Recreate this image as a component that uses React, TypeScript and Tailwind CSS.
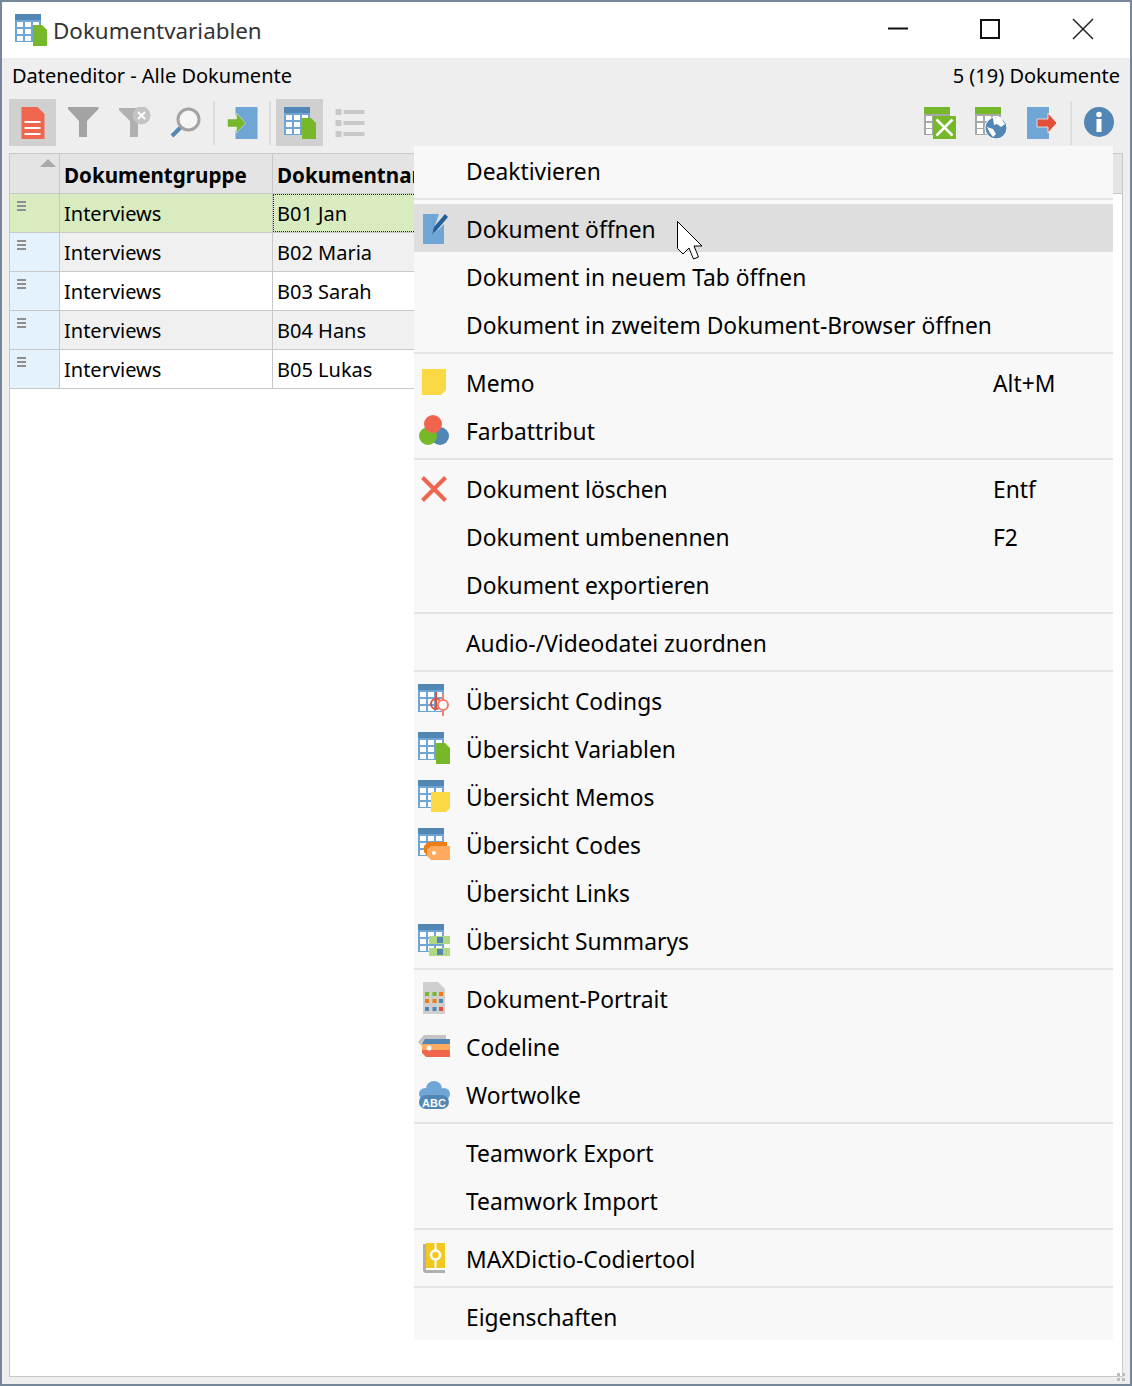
import React from "react";

const TableGrid = () => (
  <>
    <rect x="0" y="0" width="26" height="28" fill="#6fa6d6" />
    <rect x="0" y="0" width="26" height="6" fill="#5286b4" />
    {[2, 10, 18].map((x) =>
      [8, 15, 22].map((y) => (
        <rect key={`${x}-${y}`} x={x} y={y} width="6" height="5" fill="#fff" />
      ))
    )}
  </>
);

const GreyGrid = () => (
  <>
    <rect x="0" y="0" width="26" height="28" fill="#a8a8a8" />
    <rect x="0" y="0" width="26" height="7" fill="#76b82a" />
    {[2, 10, 18].map((x) =>
      [9, 16, 22].map((y) => (
        <rect key={`${x}-${y}`} x={x} y={y} width="6" height="5" fill="#fff" />
      ))
    )}
  </>
);

const Icon = ({ children }: { children?: React.ReactNode }) => (
  <svg width="32" height="32" viewBox="0 0 32 32" className="shrink-0">
    {children}
  </svg>
);

const VariablesIcon = () => (
  <Icon>
    <TableGrid />
    <path d="M18 11h9l5 5v16H18z" fill="#76b82a" />
  </Icon>
);

const menuIcons: Record<string, React.ReactNode> = {
  open: (
    <Icon>
      <path d="M5 2h16l-5 14-2 5 6-3 6-6v20H5z" fill="#6fa6d6" />
      <path d="M14 22l2-7 11-13 3 3-11 13z" fill="#1f6098" />
    </Icon>
  ),
  memo: (
    <Icon>
      <path d="M4 3h24v21l-5 5H4z" fill="#fbd944" />
    </Icon>
  ),
  color: (
    <Icon>
      <circle cx="22" cy="22" r="9" fill="#5286b4" />
      <circle cx="10" cy="22" r="9" fill="#76b82a" />
      <circle cx="15" cy="10" r="9" fill="#f0654e" />
    </Icon>
  ),
  remove: (
    <Icon>
      <path d="M4.5 5.5l23 23M27.5 5.5l-23 23" stroke="#f0654e" strokeWidth="4" fill="none" />
    </Icon>
  ),
  codings: (
    <Icon>
      <TableGrid />
      <path d="M18 8v16" stroke="#e2503a" strokeWidth="2" />
      <path d="M25 10v22" stroke="#f57f6f" strokeWidth="2" />
      <circle cx="18" cy="20" r="5" fill="none" stroke="#e2503a" strokeWidth="2" />
      <circle cx="25" cy="21" r="5" fill="#fff" stroke="#f57f6f" strokeWidth="2" />
    </Icon>
  ),
  variables: <VariablesIcon />,
  memos: (
    <Icon>
      <TableGrid />
      <path d="M13 12h19v16l-4 4H13z" fill="#fbd944" />
    </Icon>
  ),
  codes: (
    <Icon>
      <TableGrid />
      <path d="M10 14h19v6H9v8l-3-4v-6z" fill="#ef7d14" />
      <path d="M13 18h19v14H13l-4-4v-6z" fill="#ffaa5e" />
      <circle cx="16" cy="25" r="2" fill="#fff" />
    </Icon>
  ),
  summaries: (
    <Icon>
      <TableGrid />
      <rect x="11" y="12" width="21" height="8" fill="#b0d884" />
      <rect x="11" y="24" width="21" height="8" fill="#b0d884" />
      <rect x="19" y="13" width="6" height="6" fill="#5286b4" />
      <rect x="19" y="25" width="6" height="6" fill="#5286b4" />
    </Icon>
  ),
  portrait: (
    <Icon>
      <path d="M5 0h15l7 7v25H5z" fill="#cfcfcf" />
      <rect x="7" y="10" width="4" height="4" fill="#76b82a" />
      <rect x="14.5" y="10" width="4" height="4" fill="#76b82a" />
      <rect x="21" y="10" width="4" height="4" fill="#ef7d14" />
      <rect x="7" y="17" width="4" height="4" fill="#ef7d14" />
      <rect x="14.5" y="17" width="4" height="4" fill="#ef7d14" />
      <rect x="21" y="17" width="4" height="4" fill="#5286b4" />
      <rect x="7" y="25" width="4" height="4" fill="#5286b4" />
      <rect x="14.5" y="25" width="4" height="4" fill="#5286b4" />
      <rect x="21" y="25" width="4" height="4" fill="#e2503a" />
    </Icon>
  ),
  codeline: (
    <Icon>
      <path d="M6 5h22v4H8v9h-2l-6-6z" fill="#c4c4c4" />
      <path d="M7 9h25v5H4z" fill="#5286b4" />
      <path d="M4 14h28v6H4z" fill="#ffaa5e" />
      <path d="M4 20h28v7H8l-4-4z" fill="#f0654e" />
      <circle cx="11" cy="18" r="2.5" fill="#fff" />
    </Icon>
  ),
  cloud: (
    <Icon>
      <circle cx="16" cy="11" r="8" fill="#6fa6d6" />
      <circle cx="7" cy="16" r="6" fill="#6fa6d6" />
      <circle cx="26" cy="16" r="6" fill="#6fa6d6" />
      <rect x="1" y="17" width="30" height="14" rx="7" fill="#5286b4" />
      <text x="16" y="29" textAnchor="middle" fontSize="11" fontWeight="700" fill="#fff" fontFamily="Liberation Sans, sans-serif">
        ABC
      </text>
    </Icon>
  ),
  dictio: (
    <Icon>
      <path d="M5 2h3v26h19v3H7l-2-2z" fill="#b0b0b0" />
      <rect x="8" y="1" width="19" height="25" fill="#f0c81e" />
      <rect x="8" y="26" width="19" height="2" fill="#fff" />
      <path d="M17.5 1v25" stroke="#fff" strokeWidth="2" />
      <circle cx="17.5" cy="13" r="4.5" fill="#f0c81e" stroke="#fff" strokeWidth="2.5" />
    </Icon>
  ),
};

const RedDoc = () => (
  <Icon>
    <path d="M4.5 0h16l7 7v25h-23z" fill="#f0654e" />
    <path d="M7.5 15h16M7.5 21h16M7.5 27h16" stroke="#fff" strokeWidth="2" />
  </Icon>
);

const Funnel = () => (
  <Icon>
    <path d="M0 0h30.5v2L19 14v16h-8V14L0 2z" fill="#a3a3a3" />
  </Icon>
);

const FunnelOff = () => (
  <Icon>
    <path d="M0 1H27v2L19 14v16h-8V14L0 3z" fill="#b0b0b0" />
    <circle cx="22.5" cy="8.5" r="9" fill="#c4c4c4" />
    <path d="M19 5l7 7M26 5l-7 7" stroke="#fff" strokeWidth="2" />
  </Icon>
);

const Magnifier = () => (
  <Icon>
    <path d="M2 29l9-9" stroke="#5286b4" strokeWidth="4" />
    <circle cx="18.5" cy="12.5" r="10.5" fill="#f6f6f6" stroke="#a3a3a3" strokeWidth="3" />
  </Icon>
);

const ImportIcon = () => (
  <Icon>
    <path d="M9.5 0h22v32h-22v-8l8-8-8-8z" fill="#6fa6d6" />
    <path d="M1.5 12h9V6l9 10-9 10v-6h-9z" fill="#76b82a" stroke="#eee" strokeWidth=".5" />
  </Icon>
);

const ListIcon = () => (
  <Icon>
    {[2, 13, 24].map((y) => (
      <g key={y} fill="#c8c8c8">
        <rect x="0.5" y={y} width="6" height="6" />
        <rect x="8.5" y={y + 1} width="21" height="4" />
      </g>
    ))}
  </Icon>
);

const ExcelIcon = () => (
  <Icon>
    <GreyGrid />
    <rect x="9" y="9" width="23" height="23" fill="#76b82a" />
    <path d="M12.5 12.5l16 16M28.5 12.5l-16 16" stroke="#fff" strokeWidth="2.5" />
  </Icon>
);

const GlobeIcon = () => (
  <Icon>
    <GreyGrid />
    <circle cx="21" cy="21" r="11" fill="#5286b4" stroke="#fff" strokeWidth="1" />
    <path d="M18 11l7-1 5 7-4 3-4-3-3 1zM12 20l6 2 3 5-3 3-3-4z" fill="#fff" />
  </Icon>
);

const ExportIcon = () => (
  <Icon>
    <rect x="1" y="0" width="22" height="32" fill="#6fa6d6" />
    <path d="M11 12h11V6l9 10-9 10v-6H11z" fill="#e2503a" stroke="#fff" strokeWidth=".7" />
  </Icon>
);

const InfoIcon = () => (
  <Icon>
    <circle cx="16" cy="15" r="15" fill="#5286b4" />
    <rect x="13.5" y="12" width="5" height="13" fill="#fff" />
    <circle cx="16" cy="7.5" r="2.8" fill="#fff" />
  </Icon>
);

const ToolButton = ({ active, children }: { active?: boolean; children: React.ReactNode }) => (
  <div className={`flex h-[47px] w-[47px] items-center justify-center ${active ? "bg-[#d0d0d0]" : ""}`}>
    {children}
  </div>
);

const Sep = () => <div className="mt-[2px] h-[44px] w-[2px] bg-[#dddddd]" />;

type MenuEntry = { label: string; icon?: string; shortcut?: string; active?: boolean };

const menuGroups: MenuEntry[][] = [
  [{ label: "Deaktivieren" }],
  [
    { label: "Dokument öffnen", icon: "open", active: true },
    { label: "Dokument in neuem Tab öffnen" },
    { label: "Dokument in zweitem Dokument-Browser öffnen" },
  ],
  [
    { label: "Memo", icon: "memo", shortcut: "Alt+M" },
    { label: "Farbattribut", icon: "color" },
  ],
  [
    { label: "Dokument löschen", icon: "remove", shortcut: "Entf" },
    { label: "Dokument umbenennen", shortcut: "F2" },
    { label: "Dokument exportieren" },
  ],
  [{ label: "Audio-/Videodatei zuordnen" }],
  [
    { label: "Übersicht Codings", icon: "codings" },
    { label: "Übersicht Variablen", icon: "variables" },
    { label: "Übersicht Memos", icon: "memos" },
    { label: "Übersicht Codes", icon: "codes" },
    { label: "Übersicht Links" },
    { label: "Übersicht Summarys", icon: "summaries" },
  ],
  [
    { label: "Dokument-Portrait", icon: "portrait" },
    { label: "Codeline", icon: "codeline" },
    { label: "Wortwolke", icon: "cloud" },
  ],
  [{ label: "Teamwork Export" }, { label: "Teamwork Import" }],
  [{ label: "MAXDictio-Codiertool", icon: "dictio" }],
  [{ label: "Eigenschaften" }],
];

const documents = [
  { name: "B01 Jan", bg: "bg-[#d8ecc0]", head: "bg-[#d8ecc0]" },
  { name: "B02 Maria", bg: "bg-[#f0f0f0]", head: "bg-[#e3f2fd]" },
  { name: "B03 Sarah", bg: "bg-white", head: "bg-[#e3f2fd]" },
  { name: "B04 Hans", bg: "bg-[#f0f0f0]", head: "bg-[#e3f2fd]" },
  { name: "B05 Lukas", bg: "bg-white", head: "bg-[#e3f2fd]" },
];

function ContextMenu() {
  return (
    <div className="absolute left-[412px] top-[144px] w-[699px] bg-[#f8f8f8] text-[22.8px] text-black">
      {menuGroups.map((group, i) => (
        <div key={i}>
          {i > 0 && (
            <div className="flex h-[10px] items-center">
              <div className="h-[2px] w-full bg-[#e4e4e4]" />
            </div>
          )}
          {group.map((item) => (
            <div
              key={item.label}
              className={`flex h-12 items-center pl-1 ${item.active ? "bg-[#dedede]" : ""}`}
            >
              <div className="mr-4 h-8 w-8 shrink-0">{item.icon ? menuIcons[item.icon] : null}</div>
              <span className="flex-1 whitespace-nowrap pt-1">{item.label}</span>
              {item.shortcut && <span className="w-[120px] pt-1">{item.shortcut}</span>}
            </div>
          ))}
        </div>
      ))}
    </div>
  );
}

export default function App() {
  return (
    <div
      className="relative flex h-[1386px] w-[1132px] flex-col overflow-hidden border-2 border-[#76879b] bg-[#eeeeee] text-black"
      style={{ fontFamily: '"Noto Sans", sans-serif' }}
    >
      <div className="flex h-14 shrink-0 items-center bg-white">
        <div className="ml-[13px] mr-[6px] mt-[-1px]">
          <VariablesIcon />
        </div>
        <span className="mt-[1px] text-[22.4px] text-[#333333]">Dokumentvariablen</span>
        <div className="ml-auto mt-[-2px] flex items-center">
          <svg width="22" height="22" viewBox="0 0 22 22" className="mr-[70px]">
            <path d="M1 10.5h20" stroke="#111" strokeWidth="2" />
          </svg>
          <svg width="22" height="22" viewBox="0 0 22 22" className="mr-[71px]">
            <rect x="2" y="2" width="18" height="18" fill="none" stroke="#111" strokeWidth="2" />
          </svg>
          <svg width="22" height="22" viewBox="0 0 22 22" className="mr-[36px]">
            <path d="M1 1l20 20M21 1L1 21" stroke="#222" strokeWidth="1.5" />
          </svg>
        </div>
      </div>

      <div className="flex h-[41px] shrink-0 justify-between pl-[10px] pr-[10px] pt-[3px] text-[20px]">
        <span>Dateneditor - Alle Dokumente</span>
        <span>5 (19) Dokumente</span>
      </div>

      <div className="flex h-[47px] shrink-0 items-start pl-[7px] pr-[8px]">
        <ToolButton active>
          <RedDoc />
        </ToolButton>
        <div className="ml-1">
          <ToolButton>
            <Funnel />
          </ToolButton>
        </div>
        <div className="ml-1">
          <ToolButton>
            <FunnelOff />
          </ToolButton>
        </div>
        <div className="ml-1 mr-1">
          <ToolButton>
            <Magnifier />
          </ToolButton>
        </div>
        <div className="mr-[3px]">
          <Sep />
        </div>
        <ToolButton>
          <ImportIcon />
        </ToolButton>
        <div className="ml-[4px] mr-[5px]">
          <Sep />
        </div>
        <ToolButton active>
          <VariablesIcon />
        </ToolButton>
        <div className="ml-1">
          <ToolButton>
            <ListIcon />
          </ToolButton>
        </div>
        <div className="ml-auto flex">
          <ToolButton>
            <ExcelIcon />
          </ToolButton>
          <div className="ml-1">
            <ToolButton>
              <GlobeIcon />
            </ToolButton>
          </div>
          <div className="ml-1">
            <ToolButton>
              <ExportIcon />
            </ToolButton>
          </div>
          <div className="ml-[5px] mr-[3px]">
            <Sep />
          </div>
          <ToolButton>
            <InfoIcon />
          </ToolButton>
        </div>
      </div>

      <div className="mb-[7px] ml-[7px] mr-[7px] mt-[7px] flex min-h-0 flex-1 flex-col border border-[#c8c8c8] bg-white">
        <div className="flex h-[40px] shrink-0 border-b border-[#c8c8c8] bg-[#e4e4e4] text-[20.6px] font-bold">
          <div className="flex w-[50px] shrink-0 justify-end border-r border-[#c8c8c8] pr-[3px] pt-[5px]">
            <div className="h-0 w-0 border-x-[8px] border-b-[8px] border-x-transparent border-b-[#a9a9a9]" />
          </div>
          <div className="flex w-[213px] shrink-0 items-center border-r border-[#c8c8c8] pl-1 pt-1">Dokumentgruppe</div>
          <div className="flex w-[213px] items-center pl-1 pt-1">Dokumentname</div>
        </div>
        {documents.map((doc) => (
          <div key={doc.name} className="flex h-[39px] w-[800px] shrink-0 border-b border-[#c8c8c8] text-[20px]">
            <div className={`w-[50px] shrink-0 border-r border-[#c8c8c8] pl-[7px] pt-[7px] ${doc.head}`}>
              <div className="flex w-[9px] flex-col gap-[2px]">
                <div className="h-[2px] bg-[#8f8f8f]" />
                <div className="h-[2px] bg-[#8f8f8f]" />
                <div className="h-[2px] bg-[#8f8f8f]" />
              </div>
            </div>
            <div className={`flex w-[213px] shrink-0 items-center border-r border-[#c8c8c8] pl-1 pt-[2px] ${doc.bg}`}>
              Interviews
            </div>
            <div
              className={`flex flex-1 items-center pt-[2px] ${doc.bg} ${
                doc.name === "B01 Jan" ? "border border-dotted border-[#1010c0] pl-[3px]" : "pl-1"
              }`}
            >
              {doc.name}
            </div>
          </div>
        ))}
      </div>

      <ContextMenu />

      <svg width="28" height="40" viewBox="0 0 28 40" className="absolute left-[674px] top-[218px]">
        <path d="M1.5 1.5L26 26h-8l4.5 11-5 2L13 28l-6 6-5.5-5.5z" fill="#fff" stroke="#000" strokeWidth="1" />
      </svg>

      <svg width="12" height="12" viewBox="0 0 12 12" className="absolute bottom-[1px] right-[1px]">
        <g fill="#bdbdbd">
          <rect x="0" y="2" width="3" height="3" />
          <rect x="0" y="7" width="3" height="3" />
          <rect x="5" y="2" width="3" height="3" />
          <rect x="5" y="7" width="3" height="3" />
        </g>
      </svg>
    </div>
  );
}
